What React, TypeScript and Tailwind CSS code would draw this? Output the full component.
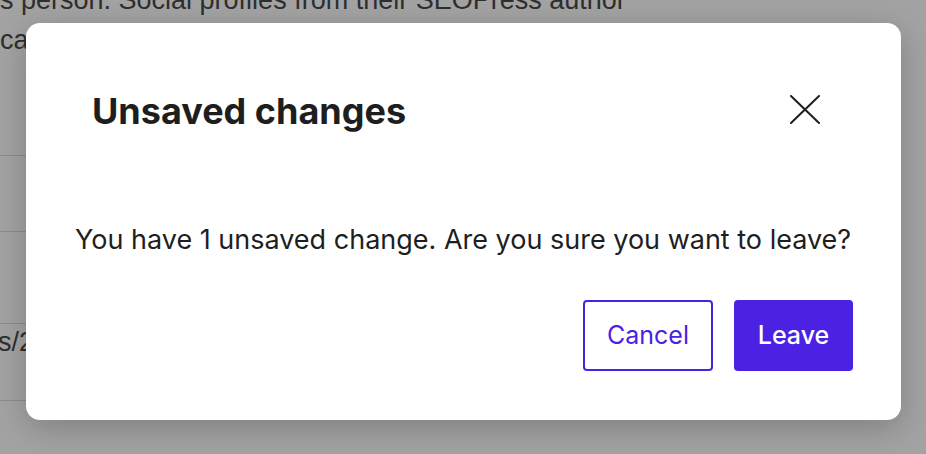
import { useState } from "react";

function CloseIcon() {
  return (
    <svg width="30" height="30" viewBox="0 0 30 30" fill="none" aria-hidden="true">
      <line x1="1" y1="1" x2="29" y2="28" stroke="#1e1e1e" strokeWidth="2" strokeLinecap="round" />
      <line x1="29" y1="1" x2="1" y2="28" stroke="#1e1e1e" strokeWidth="2" strokeLinecap="round" />
    </svg>
  );
}

function BackgroundPage() {
  return (
    <div className="flex flex-col w-full text-[#4a4a4a] font-['Liberation_Sans',Arial,sans-serif] text-[27px] leading-[32px]">
      <p className="-mt-[16px] whitespace-nowrap">s person. Social profiles from their SEOPress author</p>
      <p className="mt-[8px] whitespace-nowrap">car</p>
      <div className="mt-[99px] h-px w-[700px] bg-[#dbdbdb]" />
      <div className="mt-[75px] h-px w-[700px] bg-[#dbdbdb]" />
      <div className="mt-[91px] h-px w-[700px] bg-[#dbdbdb]" />
      <p className="mt-[2px] whitespace-nowrap -ml-[2px]">s/2</p>
      <div className="mt-[42px] h-px w-[700px] bg-[#dbdbdb]" />
    </div>
  );
}

export default function App() {
  const [open, setOpen] = useState(true);

  return (
    <div className="relative h-[454px] w-full overflow-hidden bg-white">
      <BackgroundPage />

      {open && (
        <div className="absolute inset-0 flex items-start bg-black/[0.36] pl-[26px] pt-[23px]">
          <div
            role="dialog"
            aria-modal="true"
            className="flex h-[397px] w-[875px] flex-col rounded-[14px] bg-white pt-[68px] pb-[49px] shadow-[0_8px_32px_rgba(0,0,0,0.22)] font-['Inter','Noto_Sans',sans-serif] text-[#1e1e1e]"
          >
            <div className="flex h-[40px] items-center justify-between pl-[66px] pr-[81px]">
              <h2 className="text-[36px] font-bold leading-[40px]">Unsaved changes</h2>
              <button type="button" aria-label="Close" onClick={() => setOpen(false)} className="-mt-[2px] flex h-[30px] w-[30px] items-center justify-center">
                <CloseIcon />
              </button>
            </div>

            <p className="mt-[93px] pl-[49px] text-[27px] leading-[32px]">
              You have 1 unsaved change. Are you sure you want to leave?
            </p>

            <div className="mt-[44px] flex justify-end gap-[21px] pr-[48px]">
              <button
                type="button"
                className="h-[71px] w-[130px] rounded-[4px] border-2 border-[#4b22e3] bg-white text-[25px] text-[#4b22e3]"
              >
                Cancel
              </button>
              <button
                type="button"
                className="h-[71px] w-[119px] rounded-[4px] bg-[#4b22e3] text-[25px] font-medium text-white"
              >
                Leave
              </button>
            </div>
          </div>
        </div>
      )}
    </div>
  );
}
